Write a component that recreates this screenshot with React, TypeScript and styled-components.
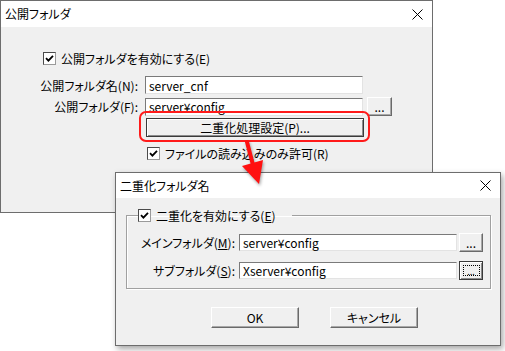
import React from 'react';
import styled, { createGlobalStyle } from 'styled-components';

const GlobalStyle = createGlobalStyle`
  body {
    margin: 0;
    background: #fff;
    font-family: "Noto Sans CJK JP", "Noto Sans", sans-serif;
    font-size: 12px;
    font-feature-settings: "palt";
    color: #000;
  }
`

const Canvas = styled.div`
  position: relative;
  width: 505px;
  height: 351px;
  overflow: hidden;
  background: #fff;
`

const Window = styled.div<{ $x: number; $y: number; $w: number; $h: number; $shadow?: boolean }>`
  position: absolute;
  left: ${p => p.$x}px;
  top: ${p => p.$y}px;
  width: ${p => p.$w}px;
  height: ${p => p.$h}px;
  box-sizing: border-box;
  border: 1px solid #6d6d6d;
  background: #f0f0f0;
  display: flex;
  flex-direction: column;
  box-shadow: ${p => (p.$shadow ? '2px 3px 6px rgba(0, 0, 0, 0.35)' : 'none')};
`

const TitleBar = styled.div<{ $h: number }>`
  height: ${p => p.$h}px;
  flex: none;
  background: #fff;
  display: flex;
  align-items: center;
  justify-content: space-between;
  padding: 0 9px 0 4px;
`

const TitleText = styled.span`
  font-size: 12px;
  line-height: 1;
`

const Body = styled.div<{ $top: number }>`
  flex: 1;
  display: flex;
  flex-direction: column;
  padding-top: ${p => p.$top}px;
`

const Row = styled.div<{ $mt?: number; $ml?: number }>`
  display: flex;
  align-items: center;
  margin-top: ${p => p.$mt ?? 0}px;
  margin-left: ${p => p.$ml ?? 0}px;
`

const CheckLabel = styled.label`
  display: flex;
  align-items: center;
  gap: 5px;
  line-height: 13px;
  white-space: nowrap;
`

const Box = styled.span`
  width: 13px;
  height: 13px;
  box-sizing: border-box;
  border: 1px solid;
  border-color: #4a4a4a #9a9a9a #9a9a9a #4a4a4a;
  background: #fff;
  display: inline-flex;
  align-items: center;
  justify-content: center;
  flex: none;
`

const FieldLabel = styled.span<{ $w: number }>`
  width: ${p => p.$w}px;
  text-align: right;
  white-space: nowrap;
  flex: none;
`

const TextBox = styled.div<{ $w: number; $h: number; $ml: number }>`
  width: ${p => p.$w}px;
  height: ${p => p.$h}px;
  margin-left: ${p => p.$ml}px;
  box-sizing: border-box;
  border: 1px solid;
  border-color: #7a7a7a #e3e3e3 #e3e3e3 #7a7a7a;
  background: #fff;
  padding-left: 3px;
  display: flex;
  align-items: center;
  flex: none;
  white-space: nowrap;
`

const Button = styled.div<{ $w: number; $h: number; $ml?: number; $strong?: boolean }>`
  width: ${p => p.$w}px;
  height: ${p => p.$h}px;
  margin-left: ${p => p.$ml ?? 0}px;
  box-sizing: border-box;
  flex: none;
  border: 1px solid;
  border-color: ${p => (p.$strong ? '#3a3a3a' : '#fff #6a6a6a #6a6a6a #fff')};
  box-shadow: ${p =>
    p.$strong
      ? 'inset 1px 1px #fff, inset -1px -1px #8c8c8c'
      : 'inset -1px -1px #a8a8a8'};
  background: #f0f0f0;
  display: flex;
  align-items: center;
  justify-content: center;
  white-space: nowrap;
  font-size: 12px;
`

const FocusRing = styled.span`
  width: 15px;
  height: 9px;
  border: 1px dotted #000;
  display: flex;
  align-items: flex-end;
  justify-content: center;
  font-size: 9px;
  line-height: 7px;
`

const Group = styled.fieldset`
  margin: 11px 9px 0 10px;
  padding: 0 6px 8px 0;
  border: 1px solid #a0a0a0;
  box-shadow: inset 1px 1px #fff, 1px 1px #fff;
  min-width: 0;
`

const Legend = styled.legend`
  margin-left: 11px;
  padding: 0 16px 0 0;
  height: 13px;
`

const Key = styled.span`
  text-decoration: underline;
`

const Footer = styled.div`
  display: flex;
  gap: 31px;
  margin-top: 18px;
  padding-left: 95px;
`

const Highlight = styled.div`
  position: absolute;
  left: 139px;
  top: 111px;
  width: 231px;
  height: 31px;
  box-sizing: border-box;
  border: 2px solid #ff1a1a;
  border-radius: 7px;
`

const ArrowSvg = styled.svg`
  position: absolute;
  left: 236px;
  top: 138px;
  overflow: visible;
  filter: drop-shadow(1px 2px 1.5px rgba(0, 0, 0, 0.35));
`

function CloseIcon() {
  return (
    <svg width="11" height="11" viewBox="0 0 11 11">
      <path d="M0.5 0.5 L10.5 10.5 M10.5 0.5 L0.5 10.5" stroke="#000" strokeWidth="1" />
    </svg>
  )
}

function Checkbox() {
  return (
    <Box>
      <svg width="9" height="9" viewBox="0 0 9 9">
        <path d="M1 4.2 L3.4 6.6 L8 1.8" stroke="#000" strokeWidth="1.8" fill="none" />
      </svg>
    </Box>
  )
}

export default function App() {
  return (
    <Canvas>
      <GlobalStyle />

      <Window $x={0} $y={0} $w={433} $h={213}>
        <TitleBar $h={26}>
          <TitleText>公開フォルダ</TitleText>
          <CloseIcon />
        </TitleBar>
        <Body $top={25}>
          <Row $ml={42}>
            <CheckLabel>
              <Checkbox />
              公開フォルダを有効にする(E)
            </CheckLabel>
          </Row>
          <Row $mt={11}>
            <FieldLabel $w={137}>公開フォルダ名(N):</FieldLabel>
            <TextBox $w={218} $h={18} $ml={7}>server_cnf</TextBox>
          </Row>
          <Row $mt={3}>
            <FieldLabel $w={137}>公開フォルダ(F):</FieldLabel>
            <TextBox $w={218} $h={18} $ml={7}>server¥config</TextBox>
            <Button $w={25} $h={19} $ml={4}>...</Button>
          </Row>
          <Row $mt={2} $ml={145}>
            <Button $w={218} $h={19} $strong>二重化処理設定(P)...</Button>
          </Row>
          <Row $mt={10} $ml={146}>
            <CheckLabel>
              <Checkbox />
              ファイルの読み込みのみ許可(R)
            </CheckLabel>
          </Row>
        </Body>
      </Window>

      <Highlight />

      <Window $x={115} $y={172} $w={386} $h={174} $shadow>
        <TitleBar $h={25}>
          <TitleText>二重化フォルダ名</TitleText>
          <CloseIcon />
        </TitleBar>
        <Body $top={0}>
          <Group>
            <Legend>
              <CheckLabel>
                <Checkbox />
                <span>二重化を有効にする(<Key>E</Key>)</span>
              </CheckLabel>
            </Legend>
            <Row $mt={11}>
              <FieldLabel $w={108}>メインフォルダ(<Key>M</Key>):</FieldLabel>
              <TextBox $w={218} $h={17} $ml={4}>server¥config</TextBox>
              <Button $w={24} $h={19} $ml={2}>...</Button>
            </Row>
            <Row $mt={9}>
              <FieldLabel $w={108}>サブフォルダ(<Key>S</Key>):</FieldLabel>
              <TextBox $w={218} $h={17} $ml={4}>Xserver¥config</TextBox>
              <Button $w={24} $h={19} $ml={2} $strong>
                <FocusRing>...</FocusRing>
              </Button>
            </Row>
          </Group>
          <Footer>
            <Button $w={88} $h={21}>OK</Button>
            <Button $w={88} $h={21}>キャンセル</Button>
          </Footer>
        </Body>
      </Window>

      <ArrowSvg width="34" height="50" viewBox="0 0 34 50">
        <path d="M11 4 L17 27" stroke="#ff1010" strokeWidth="4" strokeLinecap="round" />
        <polygon points="6,28 27,22 23,46" fill="#ff1010" />
      </ArrowSvg>
    </Canvas>
  )
}
